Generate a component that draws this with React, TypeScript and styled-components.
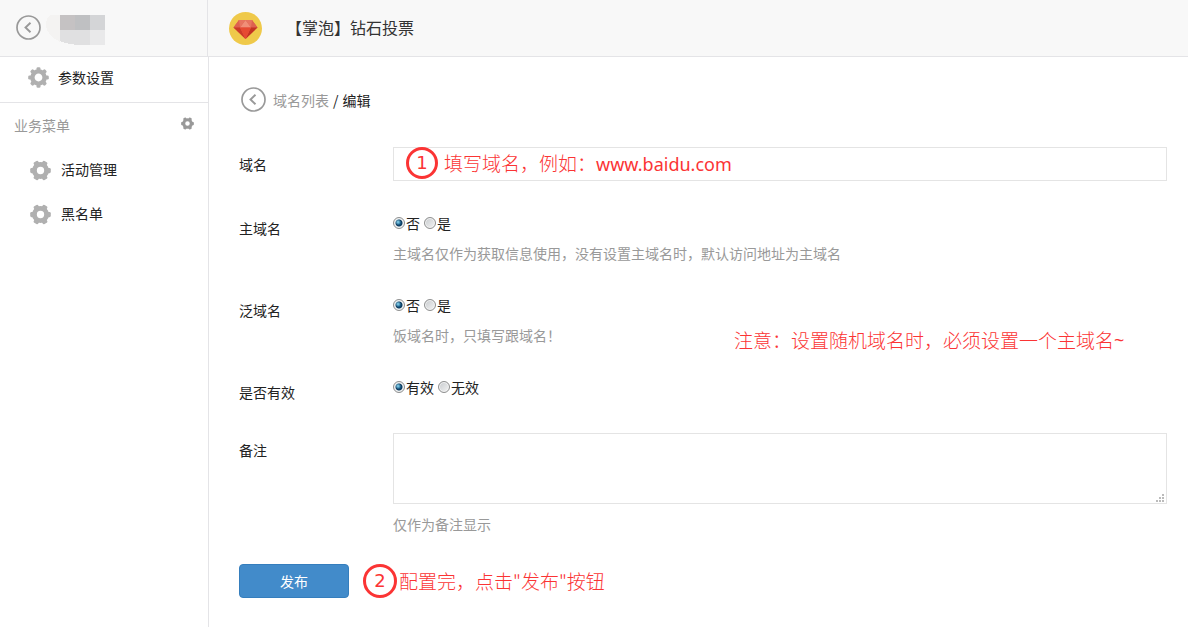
import React from 'react';
import styled, { createGlobalStyle } from 'styled-components';

const GlobalStyle = createGlobalStyle`
  * { box-sizing: border-box; }
  body {
    margin: 0;
    background: #fff;
    color: #222;
    font: 14px/20px "Noto Sans CJK SC", "Liberation Sans", sans-serif;
  }
  a { color: inherit; text-decoration: none; }
`;

const Page = styled.div`
  min-height: 100vh;
  display: flex;
  flex-direction: column;
`;

const Header = styled.header`
  display: flex;
  height: 57px;
  background: #f8f8f8;
  border-bottom: 1px solid #e4e4e7;
`;

const Brand = styled.div`
  display: flex;
  align-items: center;
  gap: 4px;
  width: 208px;
  padding: 0 0 2px 16px;
  border-right: 1px solid #e4e4e7;
`;

const BackLink = styled.a`
  display: flex;
`;

const AppTitle = styled.h1`
  display: flex;
  align-items: center;
  gap: 24px;
  margin: 0;
  padding: 0 0 2px 21px;
  font-size: 16px;
  font-weight: 400;
  color: #333;
`;

const Body = styled.div`
  display: flex;
  flex: 1;
`;

const Sidebar = styled.nav`
  width: 209px;
  flex-shrink: 0;
  border-right: 1px solid #e4e4e7;
`;

const MenuLink = styled.a<{ $top?: boolean }>`
  display: flex;
  align-items: center;
  gap: ${(p) => (p.$top ? 9 : 10)}px;
  height: ${(p) => (p.$top ? 46 : 44)}px;
  padding: ${(p) => (p.$top ? '0 0 6px 28px' : '0 0 2px 30px')};
  border-bottom: ${(p) => (p.$top ? '1px solid #e4e4e7' : 'none')};

  svg { margin-top: 2px; }
`;

const MenuHeading = styled.div`
  display: flex;
  align-items: center;
  justify-content: space-between;
  height: 45px;
  padding: 0 14px 2px;
  color: #999;
`;

const IconButton = styled.button`
  display: flex;
  padding: 0 0 2px;
  border: 0;
  background: none;
`;

const Main = styled.main`
  flex: 1;
  min-width: 0;
  padding: 30px 21px 28px 30px;
`;

const Crumbs = styled.nav`
  display: flex;
  align-items: center;
  gap: 4px;
  margin-bottom: 35px;
  padding-left: 2px;
`;

const CrumbLink = styled.a`
  display: flex;
  align-items: center;
  gap: 7px;
  color: #999;
`;

const Form = styled.form`
  display: flex;
  flex-direction: column;
  gap: 30px;
`;

const Row = styled.div`
  display: grid;
  grid-template-columns: 154px 1fr;
`;

const Label = styled.label`
  padding: 7px 0 1px;
`;

const Control = styled.div`
  position: relative;
  min-width: 0;
`;

const TextInput = styled.input`
  display: block;
  width: 100%;
  height: 34px;
  padding: 6px 12px;
  border: 1px solid #e4e4e4;
  background: #fff;
  font: inherit;
  outline: none;
`;

const TextArea = styled.textarea`
  display: block;
  width: 100%;
  height: 71px;
  padding: 6px 12px;
  border: 1px solid #e4e4e4;
  background: #fff;
  font: inherit;
  resize: none;
  outline: none;
`;

const Grip = styled.svg`
  position: absolute;
  right: 3px;
  bottom: 2px;
`;

const AreaWrap = styled.div`
  position: relative;
`;

const Radios = styled.div`
  display: flex;
  gap: 4px;
  padding-top: 2px;
`;

const RadioLabel = styled.label`
  display: flex;
  align-items: center;
  gap: 1px;
`;

const Radio = styled.input`
  appearance: none;
  width: 12px;
  height: 12px;
  margin: 0 0 1px;
  border: 1px solid #8e8f8f;
  border-radius: 50%;
  background: linear-gradient(135deg, #c6cacd, #f4f4f4);
  box-shadow: inset 0 0 0 1px #f4f4f4;

  &:checked {
    background:
      radial-gradient(circle at 4px 4px, #8fdcf7 0, rgba(42, 134, 180, 0) 3px),
      radial-gradient(circle at 5px 5px, #1d6f9e 0, #0d3a5e 3px, #e6eaec 4px);
  }
`;

const Hint = styled.p`
  margin: 11px 0 0;
  padding-bottom: 1px;
  line-height: 18px;
  color: #999;
`;

const Actions = styled.div`
  display: flex;
  align-items: center;
  gap: 14px;
`;

const Submit = styled.button`
  width: 110px;
  height: 34px;
  padding: 0;
  border: 1px solid #357ebd;
  border-radius: 4px;
  background: #428bca;
  color: #fff;
  font: inherit;
`;

const Note = styled.span<{ $gap?: number }>`
  display: flex;
  align-items: center;
  gap: ${(p) => p.$gap ?? 6}px;
  font: 300 19px/24px "Noto Sans CJK SC", sans-serif;
  color: #fb3434;
  white-space: nowrap;
  pointer-events: none;
`;

const FieldNote = styled(Note)`
  position: absolute;
  left: 13px;
  top: 0;
`;

const SideNote = styled(Note)`
  position: absolute;
  left: 341px;
  bottom: -7px;
  gap: 0;
`;

const Latin = styled.span`
  font-family: "Noto Sans", sans-serif;
  font-size: 18px;
  font-weight: 400;
`;

const Badge = styled.span<{ $size: number }>`
  display: flex;
  align-items: center;
  justify-content: center;
  width: ${(p) => p.$size}px;
  height: ${(p) => p.$size}px;
  border: 3px solid #fb3434;
  border-radius: 50%;
  font-family: "DejaVu Sans", sans-serif;
  font-size: 18px;
  font-weight: 400;
`;

const BackIcon = () => (
  <svg width="25" height="25" viewBox="0 0 25 25" fill="none" stroke="#999" aria-hidden="true">
    <circle cx="12.5" cy="12.5" r="11.5" strokeWidth="1.7" />
    <path d="M14.500 7.700 9.500 12.500l5 4.800" strokeWidth="1.9" />
  </svg>
);

const Cog = ({ size, teeth, color = '#b0b0b0' }: { size: number; teeth: number; color?: string }) => (
  <svg width={size} height={size} viewBox="-10 -10 20 20" aria-hidden="true">
    <circle r="5.8" fill="none" stroke={color} strokeWidth={teeth === 8 ? 4.2 : 4.6} />
    {Array.from({ length: teeth }, (_, i) => (
      <rect
        key={i}
        x={teeth === 8 ? -1.9 : -2.5}
        y="-9.8"
        width={teeth === 8 ? 3.8 : 5}
        height="4.4"
        rx="1.3"
        fill={color}
        transform={`rotate(${(360 / teeth) * i + (teeth === 6 ? 30 : 0)})`}
      />
    ))}
  </svg>
);

const Mosaic = () => (
  <svg width="60" height="36" viewBox="0 -6 60 36" shapeRendering="crispEdges" aria-hidden="true">
    <path d="M5 0h10v27Q2 20 1 11 1 3 5 0" fill="#f4f3f2" />
    <path d="M15 0h15v15H15z" fill="#c5c2c3" />
    <path d="M30 0h15v15H30z" fill="#bfc0c2" />
    <path d="M45 0h15v15H45z" fill="#d4d5d7" />
    <path d="M15 15h30v15H33Q22 29 15 26z" fill="#e0e0e1" />
    <path d="M45 15h15v15H45z" fill="#e9e9ea" />
  </svg>
);

const Gem = () => (
  <svg width="33" height="38" viewBox="0 -4 33 38" aria-hidden="true">
    <circle cx="16.5" cy="16.5" r="16.5" fill="#efc94a" />
    <path d="M10 8h13l5.500 7.500L16.500 27 4.500 15.500z" fill="#e2574c" />
    <path d="M10 8h13l5.500 7.500h-24z" fill="#dd6150" />
    <path d="M16.500 8 22 15.500H11z" fill="#f08f78" />
    <path d="M10 8h6.500L11 15.500z" fill="#e7745f" />
    <path d="M23 8h-6.500L22 15.500z" fill="#e7745f" />
    <path d="M4.500 15.500H11L16.500 27z" fill="#cb3b27" />
    <path d="M28.500 15.500H22L16.500 27z" fill="#c23321" />
    <path d="M11 15.500h11L16.500 27z" fill="#e64b32" />
  </svg>
);

type ChoiceProps = { name: string; label: string; options: string[] };

const Choice = ({ name, label, options }: ChoiceProps) => (
  <Radios role="radiogroup" aria-label={label}>
    {options.map((text, i) => (
      <RadioLabel key={text}>
        <Radio type="radio" name={name} value={text} defaultChecked={i === 0} />
        {text}
      </RadioLabel>
    ))}
  </Radios>
);

export default function App() {
  return (
    <Page>
      <GlobalStyle />
      <Header>
        <Brand>
          <BackLink href="#back" aria-label="返回"><BackIcon /></BackLink>
          <Mosaic />
        </Brand>
        <AppTitle><Gem />【掌泡】钻石投票</AppTitle>
      </Header>
      <Body>
        <Sidebar>
          <MenuLink href="#settings" $top><Cog size={21} teeth={8} />参数设置</MenuLink>
          <MenuHeading>
            业务菜单
            <IconButton type="button" aria-label="菜单设置"><Cog size={13} teeth={6} color="#999" /></IconButton>
          </MenuHeading>
          <MenuLink href="#activity"><Cog size={21} teeth={6} />活动管理</MenuLink>
          <MenuLink href="#blacklist"><Cog size={21} teeth={6} />黑名单</MenuLink>
        </Sidebar>
        <Main>
          <Crumbs>
            <CrumbLink href="#domains"><BackIcon />域名列表</CrumbLink>
            <span>/</span>
            <span>编辑</span>
          </Crumbs>
          <Form onSubmit={(e) => e.preventDefault()}>
            <Row>
              <Label htmlFor="domain">域名</Label>
              <Control>
                <TextInput id="domain" type="text" />
                <FieldNote>
                  <Badge $size={32}>1</Badge>
                  <span>填写域名，例如：<Latin>www.baidu.com</Latin></span>
                </FieldNote>
              </Control>
            </Row>
            <Row>
              <Label as="span">主域名</Label>
              <Control>
                <Choice name="primary" label="主域名" options={['否', '是']} />
                <Hint>主域名仅作为获取信息使用，没有设置主域名时，默认访问地址为主域名</Hint>
              </Control>
            </Row>
            <Row>
              <Label as="span">泛域名</Label>
              <Control>
                <Choice name="wildcard" label="泛域名" options={['否', '是']} />
                <Hint>饭域名时，只填写跟域名！</Hint>
                <SideNote>注意：设置随机域名时，必须设置一个主域名<Latin>~</Latin></SideNote>
              </Control>
            </Row>
            <Row>
              <Label as="span">是否有效</Label>
              <Control>
                <Choice name="valid" label="是否有效" options={['有效', '无效']} />
              </Control>
            </Row>
            <Row>
              <Label htmlFor="remark">备注</Label>
              <Control>
                <AreaWrap>
                  <TextArea id="remark" />
                  <Grip width="8" height="8" fill="#bbb" shapeRendering="crispEdges" aria-hidden="true">
                    <path d="M6 0h2v2H6zM3 3h2v2H3zM6 3h2v2H6zM0 6h2v2H0zM3 6h2v2H3zM6 6h2v2H6z" />
                  </Grip>
                </AreaWrap>
                <Hint>仅作为备注显示</Hint>
              </Control>
            </Row>
            <Actions>
              <Submit type="submit">发布</Submit>
              <Note $gap={2}>
                <Badge $size={34}>2</Badge>
                <span>配置完，点击"发布"按钮</span>
              </Note>
            </Actions>
          </Form>
        </Main>
      </Body>
    </Page>
  );
}
